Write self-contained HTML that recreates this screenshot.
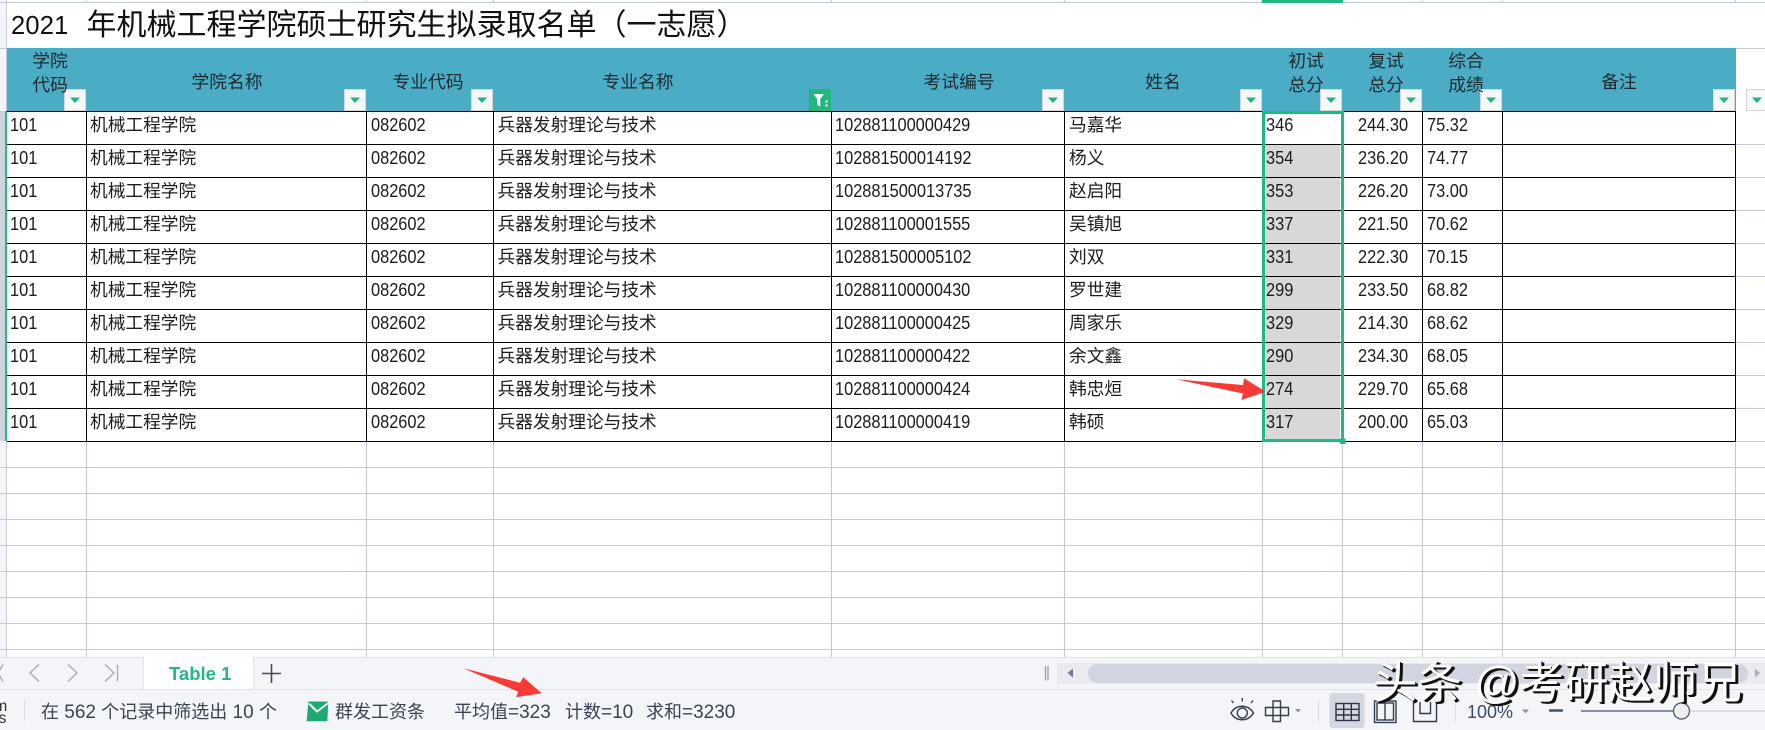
<!DOCTYPE html>
<html lang="zh">
<head>
<meta charset="utf-8">
<title>2021 年机械工程学院硕士研究生拟录取名单</title>
<style>
html,body{margin:0;padding:0;background:#fff}
body{position:relative;width:1765px;height:730px;overflow:hidden;font-family:"Liberation Sans","Noto Sans CJK SC",sans-serif;color:#1c1c1c}
svg.bg{position:absolute;left:0;top:0}
.r{position:absolute;left:0;width:1765px;height:33px}
.t{position:absolute;top:4px;height:20px;line-height:20px;font-size:17.7px;white-space:nowrap;letter-spacing:0}
.n{font-size:18.6px;transform:scaleX(.88);transform-origin:0 50%}
.c1{left:10px}.c2{left:90px}.c3{left:370.5px}.c4{left:497.5px}.c5{left:835px}.c6{left:1069px}.c7{left:1265.5px}.c8{left:1358px}.c9{left:1427px}
.h{position:absolute;font-size:17.8px;line-height:24px;text-align:center;white-space:nowrap;transform:translateX(-50%);color:#1c2a30}
.s{position:absolute;white-space:nowrap;font-size:18px;line-height:22px;color:#3a4354}
.s b{font-weight:400;font-size:19px}
.ttl{position:absolute;top:8px;height:36px;line-height:36px;white-space:nowrap;color:#111}
.wm{position:absolute;left:1373px;top:656px;font-size:44.5px;line-height:56px;color:#fff;white-space:nowrap;text-shadow:3px 2px 0 #111,2px 2px 0 #111,1px 1px 0 #111;letter-spacing:0}
</style>
</head>
<body>
<svg class="bg" width="1765" height="730" viewBox="0 0 1765 730" xmlns="http://www.w3.org/2000/svg">
  <rect width="1765" height="730" fill="#fff"/>
  <!-- gutter -->
  <rect x="0" y="0" width="6" height="657" fill="#f4f5f8"/>
  <rect x="0" y="111" width="6" height="330" fill="#cfd3db"/>
  <!-- light grid -->
  <g stroke="#c3c9da" stroke-width="1" shape-rendering="crispEdges" fill="none">
    <path d="M0 2.5H1765M0 48.5H6M1736 48.5H1765M1736 144.5H1765M1736 177.5H1765M1736 210.5H1765M1736 243.5H1765M1736 276.5H1765M1736 309.5H1765M1736 342.5H1765M1736 375.5H1765M1736 408.5H1765M1736 441.5H1765"/>
    <path d="M0 467.5H1765M0 493.5H1765M0 519.5H1765M0 545.5H1765M0 571.5H1765M0 597.5H1765M0 623.5H1765M0 649.5H1765"/>
    <path d="M86.5 0V3M366.5 0V3M493.5 0V3M831.5 0V3M1064.5 0V3M1422.5 0V3M1502.5 0V3M1735.5 0V3"/>
    <path d="M86.5 442V657M366.5 442V657M493.5 442V657M831.5 442V657M1064.5 442V657M1262.5 442V657M1342.5 442V657M1422.5 442V657M1502.5 442V657M1735.5 442V657"/>
    <path d="M6.5 0V111M6.5 441V657"/>
  </g>
  <rect x="1262" y="0" width="81" height="3" fill="#20b981"/>
  <!-- header band -->
  <rect x="7" y="48" width="1729" height="63" fill="#4bacc6"/>
  <!-- gray selection -->
  <rect x="1266" y="145" width="74" height="294" fill="#d8d8d8"/>
  <!-- black table -->
  <g stroke="#000" stroke-width="1" shape-rendering="crispEdges" fill="none">
    <path d="M7 111.5H1736M7 144.5H1736M7 177.5H1736M7 210.5H1736M7 243.5H1736M7 276.5H1736M7 309.5H1736M7 342.5H1736M7 375.5H1736M7 408.5H1736M7 441.5H1736"/>
    <path d="M86.5 111V442M366.5 111V442M493.5 111V442M831.5 111V442M1064.5 111V442M1422.5 111V442M1502.5 111V442M1735.5 111V442"/>
  </g>
  <rect x="5" y="111" width="2" height="330" fill="#20b981"/>
  <!-- selection border -->
  <rect x="1263.5" y="112.5" width="79" height="328" fill="none" stroke="#20b981" stroke-width="3"/>
  <rect x="1340" y="438.5" width="5.500" height="5.500" fill="#20b981"/>
  <!-- filter buttons -->
  <g id="fb">
    <g fill="#f6f7f9" stroke="#d4d6da" stroke-width="1" shape-rendering="crispEdges">
      <rect x="64.5" y="89.5" width="21" height="21"/><rect x="344.5" y="89.5" width="21" height="21"/><rect x="471.5" y="89.5" width="21" height="21"/>
      <rect x="1042.5" y="89.5" width="21" height="21"/><rect x="1240.5" y="89.5" width="21" height="21"/><rect x="1320.5" y="89.5" width="21" height="21"/>
      <rect x="1400.5" y="89.5" width="21" height="21"/><rect x="1480.5" y="89.5" width="21" height="21"/><rect x="1713.5" y="89.5" width="21" height="21"/><rect x="1746.5" y="89.5" width="25" height="21"/>
    </g>
    <g fill="#22b67f">
      <path d="M70 97.5h10l-5 5.5zM350 97.5h10l-5 5.5zM477 97.5h10l-5 5.5zM1048 97.5h10l-5 5.5zM1246 97.5h10l-5 5.5zM1326 97.5h10l-5 5.5zM1406 97.5h10l-5 5.5zM1486 97.5h10l-5 5.5zM1719 97.5h10l-5 5.5zM1752 97.5h10l-5 5.5z"/>
      <rect x="809" y="89" width="22" height="22"/>
    </g>
    <path d="M813.5 94h10.5l-3.7 5v7.5l-3 -1.6V99z" fill="#fff"/>
    <path d="M825.5 100.5h2v2h-2zM825.5 104.5h2v2h-2z" fill="#fff"/>
  </g>
  <!-- tab bar -->
  <rect x="0" y="657" width="1765" height="73" fill="#f4f5f8"/>
  <rect x="0" y="657" width="1765" height="1" fill="#dfe1e7"/>
  <rect x="0" y="689" width="1765" height="1" fill="#e0e2e7"/>
  <rect x="143.5" y="657" width="110" height="32" fill="#fff"/>
  <path d="M143.5 657V689M253.5 657V689" stroke="#e3e5ea" stroke-width="1" fill="none"/>
  <g fill="none" stroke="#a9acb2" stroke-width="1.4">
    <path d="M3 664.5l-5 8.5l5 8.5"/>
    <path d="M39 664.5l-9 8.5l9 8.5"/>
    <path d="M68 664.5l9 8.5l-9 8.5"/>
    <path d="M105 664.5l9 8.5l-9 8.5M117.5 664.5v17"/>
  </g>
  <path d="M262 673.5H281M271.5 664V683" stroke="#3d4a63" stroke-width="1.6" fill="none"/>
  <!-- scrollbar -->
  <path d="M1045.5 666V680.5M1048 666V680.5" stroke="#8e99b3" stroke-width="1.2" fill="none"/>
  <rect x="1057" y="663" width="708" height="21" fill="#e9ebf1"/>
  <path d="M1073 668.5v9l-5.5 -4.5z" fill="#6f7c98"/>
  <rect x="1088" y="664" width="660" height="19" rx="9.5" fill="#d1d5df"/>
  <path d="M1755 668.5v9l5 -4.5z" fill="#a7afc2"/>
  <!-- status bar left -->
  <rect x="24" y="700" width="1" height="21" fill="#d9dbe1"/>
  <path d="M308.300 701.500H328.300L327.300 721.300H306.700Z" fill="#1fa86f"/>
  <path d="M309 703.500L317 711.500L329.500 702" fill="none" stroke="#f4f5f8" stroke-width="2"/>
  <!-- status right icons -->
  <g fill="none" stroke="#333d50" stroke-width="1.4">
    <path d="M1231 713c5 -9 17 -9 22.500 0c-5.500 9 -17.500 9 -22.500 0z"/>
    <circle cx="1242.300" cy="713" r="5"/>
    <path d="M1242.300 701.500v-3.500M1233.500 703l-2 -2.500M1251 703l2 -2.500"/>
    <path d="M1273 701h7.500v6.500h8v8h-8v6h-7.500v-6h-7.500v-8h7.500zM1273 707.500h7.500v8h-7.500z"/>
    <rect x="1336" y="703.500" width="23" height="17"/>
    <path d="M1336 709.300h23M1336 715h23M1343.700 703.500v17M1351.300 703.500v17"/>
    <rect x="1374.500" y="701" width="21.500" height="21.500"/>
    <rect x="1377" y="703" width="16.500" height="17"/>
    <path d="M1385 703v17"/>
    <path d="M1413.500 702v19.500h23v-19.500M1420 702v11.500h10.500v-11.500"/>
  </g>
  <path d="M1295 709h6l-3 3.500zM1522 709.500h7l-3.500 4z" fill="#8b93a6"/>
  <rect x="1318" y="701" width="1" height="21" fill="#dcdee4"/>
  <rect x="1455" y="701" width="1" height="21" fill="#dcdee4"/>
  <rect x="1329.500" y="693" width="35" height="35" rx="3" fill="#dde0e7" style="mix-blend-mode:multiply"/>
  <path d="M1549 710.500h14" stroke="#46526b" stroke-width="2.500"/>
  <path d="M1581 711H1674" stroke="#46526b" stroke-width="1.200"/>
  <path d="M1690 711H1765" stroke="#c9ccd4" stroke-width="1"/>
  <circle cx="1681.500" cy="711" r="8" fill="#eceef1" stroke="#454d5e" stroke-width="1.200"/>
</svg>

<div class="ttl" style="left:11px;font-size:25.500px;letter-spacing:.2px">2021</div>
<div class="ttl" style="left:86.500px;font-size:30px">年机械工程学院硕士研究生拟录取名单（一志愿）</div>

<div class="h" style="left:50px;top:49px">学院<br>代码</div>
<div class="h" style="left:227px;top:70px">学院名称</div>
<div class="h" style="left:428px;top:70px">专业代码</div>
<div class="h" style="left:638px;top:70px">专业名称</div>
<div class="h" style="left:959px;top:70px">考试编号</div>
<div class="h" style="left:1163px;top:70px">姓名</div>
<div class="h" style="left:1306px;top:49px">初试<br>总分</div>
<div class="h" style="left:1386px;top:49px">复试<br>总分</div>
<div class="h" style="left:1466px;top:49px">综合<br>成绩</div>
<div class="h" style="left:1619px;top:70px">备注</div>

<div class="r" style="top:111px"><div class="t n c1">101</div><div class="t c2">机械工程学院</div><div class="t n c3">082602</div><div class="t c4">兵器发射理论与技术</div><div class="t n c5">102881100000429</div><div class="t c6">马嘉华</div><div class="t n c7">346</div><div class="t n c8">244.30</div><div class="t n c9">75.32</div></div>
<div class="r" style="top:144px"><div class="t n c1">101</div><div class="t c2">机械工程学院</div><div class="t n c3">082602</div><div class="t c4">兵器发射理论与技术</div><div class="t n c5">102881500014192</div><div class="t c6">杨义</div><div class="t n c7">354</div><div class="t n c8">236.20</div><div class="t n c9">74.77</div></div>
<div class="r" style="top:177px"><div class="t n c1">101</div><div class="t c2">机械工程学院</div><div class="t n c3">082602</div><div class="t c4">兵器发射理论与技术</div><div class="t n c5">102881500013735</div><div class="t c6">赵启阳</div><div class="t n c7">353</div><div class="t n c8">226.20</div><div class="t n c9">73.00</div></div>
<div class="r" style="top:210px"><div class="t n c1">101</div><div class="t c2">机械工程学院</div><div class="t n c3">082602</div><div class="t c4">兵器发射理论与技术</div><div class="t n c5">102881100001555</div><div class="t c6">吴镇旭</div><div class="t n c7">337</div><div class="t n c8">221.50</div><div class="t n c9">70.62</div></div>
<div class="r" style="top:243px"><div class="t n c1">101</div><div class="t c2">机械工程学院</div><div class="t n c3">082602</div><div class="t c4">兵器发射理论与技术</div><div class="t n c5">102881500005102</div><div class="t c6">刘双</div><div class="t n c7">331</div><div class="t n c8">222.30</div><div class="t n c9">70.15</div></div>
<div class="r" style="top:276px"><div class="t n c1">101</div><div class="t c2">机械工程学院</div><div class="t n c3">082602</div><div class="t c4">兵器发射理论与技术</div><div class="t n c5">102881100000430</div><div class="t c6">罗世建</div><div class="t n c7">299</div><div class="t n c8">233.50</div><div class="t n c9">68.82</div></div>
<div class="r" style="top:309px"><div class="t n c1">101</div><div class="t c2">机械工程学院</div><div class="t n c3">082602</div><div class="t c4">兵器发射理论与技术</div><div class="t n c5">102881100000425</div><div class="t c6">周家乐</div><div class="t n c7">329</div><div class="t n c8">214.30</div><div class="t n c9">68.62</div></div>
<div class="r" style="top:342px"><div class="t n c1">101</div><div class="t c2">机械工程学院</div><div class="t n c3">082602</div><div class="t c4">兵器发射理论与技术</div><div class="t n c5">102881100000422</div><div class="t c6">余文鑫</div><div class="t n c7">290</div><div class="t n c8">234.30</div><div class="t n c9">68.05</div></div>
<div class="r" style="top:375px"><div class="t n c1">101</div><div class="t c2">机械工程学院</div><div class="t n c3">082602</div><div class="t c4">兵器发射理论与技术</div><div class="t n c5">102881100000424</div><div class="t c6">韩忠烜</div><div class="t n c7">274</div><div class="t n c8">229.70</div><div class="t n c9">65.68</div></div>
<div class="r" style="top:408px"><div class="t n c1">101</div><div class="t c2">机械工程学院</div><div class="t n c3">082602</div><div class="t c4">兵器发射理论与技术</div><div class="t n c5">102881100000419</div><div class="t c6">韩硕</div><div class="t n c7">317</div><div class="t n c8">200.00</div><div class="t n c9">65.03</div></div>

<div class="s" style="left:169px;top:663px;font-size:18.500px;font-weight:700;color:#22b883">Table 1</div>
<div class="s" style="left:-6px;top:701px;font-size:16px;line-height:12px;color:#333">m<br>&nbsp;s</div>
<div class="s" style="left:41px;top:701px">在<b> 562 </b>个记录中筛选出<b> 10 </b>个</div>
<div class="s" style="left:335px;top:701px">群发工资条</div>
<div class="s" style="left:454px;top:701px">平均值<b>=323</b></div>
<div class="s" style="left:565px;top:701px">计数<b>=10</b></div>
<div class="s" style="left:646px;top:701px">求和<b>=3230</b></div>
<div class="s" style="left:1467px;top:701px;color:#3a4a6b">100%</div>

<svg style="position:absolute;left:0;top:0" width="1765" height="730" viewBox="0 0 1765 730" xmlns="http://www.w3.org/2000/svg">
  <path d="M1176 379.300L1243 385L1244 378.300L1265.700 391.700L1241.300 400L1243 393.500Z" fill="#f93a38"/>
  <path d="M463.300 668.300L520 682.700L523.300 677.300L541.700 693.300L516 697.300L518.300 691.700Z" fill="#f93a38"/>
</svg>

<div class="wm">头条 @考研赵师兄</div>
</body>
</html>
